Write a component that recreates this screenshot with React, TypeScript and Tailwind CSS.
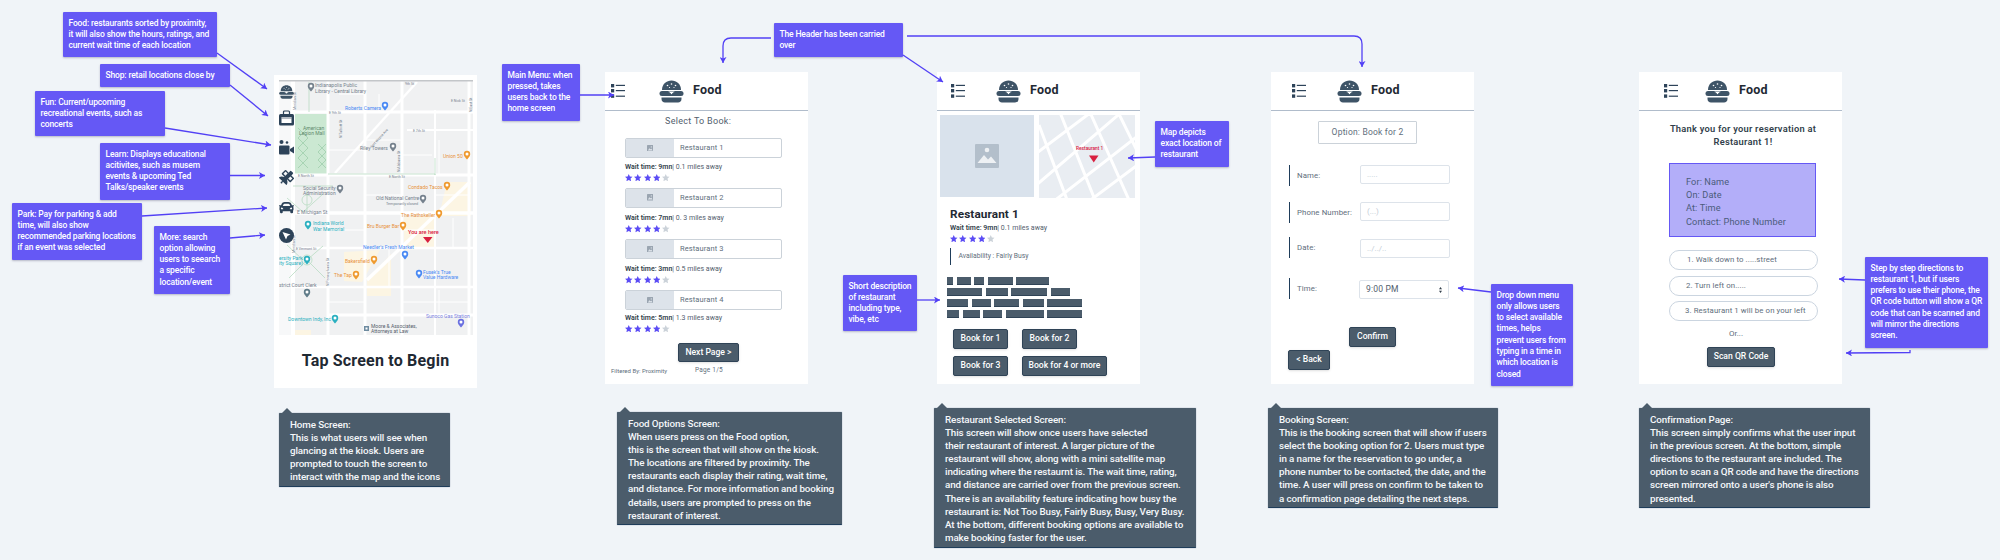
import React from 'react';
import { FaCar, FaSatellite } from 'react-icons/fa';

const ARROW = '#5240f5';

const Star: React.FC<{ on?: boolean }> = ({ on = true }) => (
  <svg viewBox="0 0 20 20" className={`w-[7.5px] h-[7.5px] ${on ? 'fill-[#5b4cf5]' : 'fill-[#cbd2d9]'}`}>
    <path d="M10 0l3 6.6 7 .8-5.2 4.8 1.4 7.1L10 15.7l-6.2 3.6 1.4-7.1L0 7.4l7-.8z" />
  </svg>
);

const Stars = ({ className = '' }: { className?: string }) => (
  <div className={`flex gap-[1.8px] ${className}`}>
    <Star /><Star /><Star /><Star /><Star on={false} />
  </div>
);

const Burger = ({ className = '' }: { className?: string }) => (
  <svg viewBox="0 0 24 23" className={className}>
    <path d="M2.5 10C2.5 4 7 .5 12 .5S21.5 4 21.5 10z" fill="#3e5467" />
    <circle cx="8" cy="5.5" r=".8" fill="#fff" /><circle cx="12" cy="4" r=".8" fill="#fff" /><circle cx="16" cy="5.5" r=".8" fill="#fff" />
    <circle cx="10" cy="7.5" r=".6" fill="#fff" /><circle cx="14.5" cy="7.5" r=".6" fill="#fff" />
    <rect x="0" y="11" width="24" height="5" rx="2.5" fill="#3e5467" />
    <path d="M8.5 11.5l3.5 3 3.5-3" fill="#fff" stroke="#3e5467" strokeWidth=".8" />
    <path d="M2 17.5h20v1.5c0 2-1.5 3.5-3.5 3.5h-13C3.5 22.5 2 21 2 19z" fill="#3e5467" />
  </svg>
);

const ListIcon = () => (
  <svg viewBox="0 0 14 14" className="w-[14px] h-[14px]">
    <rect x="0" y="0" width="3.2" height="3.4" fill="#2d4359" /><rect x="0" y="5" width="3.2" height="3.4" fill="#2d4359" /><rect x="0" y="10.4" width="3.2" height="3.4" fill="#2d4359" />
    <rect x="4.8" y=".8" width="9.2" height="1.2" fill="#2d4359" /><rect x="4.8" y="6" width="9.2" height="1.2" fill="#2d4359" /><rect x="4.8" y="11.6" width="9.2" height="1.2" fill="#2d4359" />
  </svg>
);

const Header = ({ pad, gap }: { pad: string; gap: string }) => (
  <div className={`h-[39px] border-b border-[#b0bccb] flex items-center ${pad}`}>
    <div className={gap}><ListIcon /></div>
    <Burger className="w-[25px] h-[23px]" />
    <span className="ml-[9px] mb-[1px] text-[12.5px] font-bold text-[#1f2933] tracking-[0.2px]">Food</span>
  </div>
);

const Btn = ({ className, children }: { className: string; children: React.ReactNode }) => (
  <div className={`h-[19.5px] flex items-center justify-center bg-[#4b5c6b] border border-[#2f4356] rounded-[2px] text-white text-[8.6px] font-medium shadow-sm whitespace-nowrap ${className}`}>
    {children}
  </div>
);

const Note = ({ className, lines }: { className: string; lines: string[] }) => (
  <div className={`absolute bg-[#6558f5] shadow-[0_1px_2px_rgba(50,50,93,0.3)] rounded-[1px] px-[5.5px] pt-[5.5px] text-white text-[8.5px] tracking-[-0.15px] leading-[11.33px] font-medium whitespace-nowrap ${className}`}>
    {lines.map((l) => <div key={l}>{l}</div>)}
  </div>
);

const Desc = ({ className, lines }: { className: string; lines: string[] }) => (
  <div className={`absolute bg-[#4b5c6b] border-b border-[#1f3d5a] shadow-[0_0_1px_rgba(31,61,90,0.8)] rounded-[1px] pl-[11px] pt-[4.5px] text-[#f5f7fa] text-[9.8px] tracking-[-0.1px] leading-[13.17px] font-medium whitespace-nowrap ${className}`}>
    <div className="absolute -top-[5px] left-[3px] w-[10px] h-[5px] bg-[#4b5c6b] [clip-path:polygon(50%_0,100%_100%,0_100%)]" />
    {lines.map((l) => <div key={l}>{l}</div>)}
  </div>
);

const Pin = ({ x, y, c }: { x: number; y: number; c: string }) => (
  <g transform={`translate(${x} ${y})`}>
    <path d="M0 4.5C-2.8 1.5-3.2 .5-3.2-1a3.2 3.2 0 0 1 6.4 0C3.2 .5 2.8 1.5 0 4.5z" fill={c} />
    <circle cx="0" cy="-1" r="1.5" fill="#fff" />
  </g>
);

const mapLabels: [string, number, number, string, number?][] = [
  ['Indianapolis Public', 36, 7, '#75818d'], ['Library - Central Library', 36, 12.5, '#75818d'],
  ['Roberts Camera', 66, 29.5, '#4a8af4'], ['American', 24, 50, '#5f8a6e'], ['Legion Mall', 20, 55, '#5f8a6e'],
  ['Riley Towers', 81, 70, '#75818d'], ['Union 50', 164, 78, '#e8913a'], ['Condado Tacos', 129, 109, '#e8913a'],
  ['Social Security', 24, 110, '#75818d'], ['Administration', 24, 115, '#75818d'],
  ['Old National Centre', 97, 120, '#75818d'], ['Temporarily closed', 107, 125, '#75818d', 3.8],
  ['E Michigan St', 18, 134, '#75818d'], ['The Rathskeller', 122, 137, '#e8913a'],
  ['Indiana World', 34, 145, '#2bb0c0'], ['War Memorial', 34, 151, '#2bb0c0'], ['Bru Burger Bar', 88, 148, '#e8913a'],
  ["Needler's Fresh Market", 84, 169, '#4a8af4'], ['Bakersfield', 66, 183, '#e8913a'],
  ["Fusek's True", 144, 194, '#4a8af4'], ['Value Hardware', 144, 199, '#4a8af4'], ['The Tap', 55, 197, '#e8913a'],
  ['ersity Park', 0, 180, '#2bb0c0'], ['ity Square)', 0, 185, '#2bb0c0'], ['strict Court Clerk', 0, 207, '#75818d'],
  ['Downtown Indy, Inc', 9, 241, '#2bb0c0'], ['Sunoco Gas Station', 147, 238, '#7a7fe0'],
  ['Moore & Associates,', 92, 248, '#55606b'], ['Attorneys at Law', 92, 253, '#55606b'],
  ['E 9th St', 50, 34, '#75818d', 3.5], ['E 7th St', 134, 52, '#75818d', 3.5], ['E North St', 110, 98, '#75818d', 3.5],
  ['E North St', 19, 97, '#75818d', 3.5], ['E Nick St', 172, 22, '#75818d', 3.5], ['9th St', 126, 5, '#75818d', 3.5],
  ['E Vermont St', 17, 170, '#75818d', 3.5],
];

const mapPins: [number, number, string][] = [
  [32, 7, '#75818d'], [106, 26, '#4a8af4'], [114, 67, '#75818d'], [188, 75, '#ef9a2f'], [168, 106, '#ef9a2f'], [61, 109, '#75818d'],
  [144, 119, '#75818d'], [160, 134, '#ef9a2f'], [29, 145, '#2bb0c0'], [124, 146, '#ef9a2f'], [126, 175, '#4a8af4'], [95, 180, '#ef9a2f'],
  [140, 194, '#4a8af4'], [77, 195, '#ef9a2f'], [28, 180, '#2bb0c0'], [28, 213, '#5f7b88'], [56, 239, '#2bb0c0'], [182, 243, '#6a70e0'],
];

const MapDrawing = () => (
  <svg viewBox="0 0 194 255" className="w-[194px] h-[255px] block bg-[#f0f1f2] font-['Roboto',sans-serif]">
    <rect x="0" y="0" width="14" height="255" fill="#f7f8f9" />
    <rect x="16" y="34" width="33" height="60" fill="#cbe8d2" />
    <path d="M19 48l10 10-10 10 10 10-10 10M29 48L19 58l10 10-10 10 10 10M39 64l8 8-8 8 8 8M47 64l-8 8 8 8-8 8" fill="none" stroke="#9acba7" strokeWidth=".7" />
    <path d="M168 102h24v34h-32zM125 137l30-1v32l-30 2zM65 172l36-2-18 32-18-1zM12 250h20v5H12zM88 200l24-26v42H88z" fill="#fcf5e3" />
    <g stroke="#fff" fill="none">
      <path d="M14 0v255" strokeWidth="4" /><path d="M49 0v255" strokeWidth="3" /><path d="M86 0v255" strokeWidth="3" /><path d="M123 0v255" strokeWidth="3" /><path d="M156 30v225" strokeWidth="2" /><path d="M190 0v255" strokeWidth="3" />
      <path d="M14 32H194" strokeWidth="3" /><path d="M128 50H194" strokeWidth="2" /><path d="M14 95H194" strokeWidth="3" /><path d="M14 133H194" strokeWidth="3.5" /><path d="M14 168H194" strokeWidth="2.5" /><path d="M14 207H194" strokeWidth="2.5" /><path d="M49 235H194" strokeWidth="3" />
      <path d="M138 2L56 93" strokeWidth="2.5" /><path d="M191 102L88 200" strokeWidth="3.5" />
      <path d="M49 70H86M86 60h37M123 75h30M49 150h37M123 150h33M86 115h37M156 115h34M49 222h37M123 222h67M60 14h26M100 14v18M160 60v35M174 138v30M110 170v37M160 210v25" strokeWidth="1" />
    </g>
    <path d="M30 2v30M49 94h107v1M156 78v17M14 106h40M8 118l16 14 20-18M28 132v-22M24 180L8 165M28 180l16-14M28 180L10 198M28 180l18 18" fill="none" stroke="#b9dcc3" strokeWidth=".8" />
    <circle cx="28" cy="120" r="5" fill="none" stroke="#b9dcc3" strokeWidth=".8" /><circle cx="28" cy="180" r="5" fill="none" stroke="#b9dcc3" strokeWidth=".8" />
    <rect x="0" y="0" width="194" height="1.5" fill="#c3c6c9" />
    {mapPins.map(([x, y, c]) => <Pin key={`${x}-${y}`} x={x} y={y} c={c} />)}
    {mapLabels.map(([t, x, y, c, s]) => <text key={`${t}-${x}-${y}`} x={x} y={y} fontSize={s ?? 5} fill={c}>{t}</text>)}
    <text x="17" y="30" fontSize="3.5" fill="#75818d" transform="rotate(-90 17 30)">Meridian St</text>
    <text x="63" y="58" fontSize="3.5" fill="#75818d" transform="rotate(-90 63 58)">N Talbott St</text>
    <text x="93" y="68" fontSize="3.5" fill="#75818d" transform="rotate(-48 93 68)">Fort Wayne Ave</text>
    <text x="121" y="92" fontSize="3.5" fill="#75818d" transform="rotate(-90 121 92)">N Alabama St</text>
    <text x="193" y="32" fontSize="3.5" fill="#75818d" transform="rotate(-90 193 32)">N East St</text>
    <text x="16" y="173" fontSize="3.5" fill="#75818d" transform="rotate(-90 16 173)">Meridian St</text>
    <text x="50" y="206" fontSize="3.5" fill="#75818d" transform="rotate(-90 50 206)">N Pennsylvania St</text>
    <rect x="85" y="246" width="5" height="5" fill="#6e8ba0" /><rect x="86.5" y="247.5" width="2" height="2" fill="#fff" />
    <text x="129" y="154" fontSize="5.5" fontWeight="500" fill="#d8203f">You are here</text>
    <path d="M144 157h9.5l-4.75 6z" fill="#d8203f" />
  </svg>
);

const SideIcons = () => (
  <div className="w-[15px] flex flex-col items-center text-[#2d4359]">
    <Burger className="w-[15px] h-[14px]" />
    <svg viewBox="0 0 15 16" className="w-[15px] h-[16px] mt-[11px]">
      <path d="M4.5 4V2a1 1 0 0 1 1-1h4a1 1 0 0 1 1 1v2" fill="none" stroke="#2d4359" strokeWidth="1.2" />
      <rect x="0" y="4" width="15" height="11.5" rx="1.5" fill="#2d4359" /><rect x="2.5" y="7" width="10" height="6" fill="#fff" /><rect x="2.5" y="7" width="10" height="2" fill="#2d4359" opacity=".35" />
    </svg>
    <svg viewBox="0 0 15 15" className="w-[15px] h-[15px] mt-[14px]">
      <circle cx="2.5" cy="2" r="2" fill="#2d4359" /><circle cx="8" cy="2.5" r="1.3" fill="#2d4359" />
      <rect x="0" y="5.5" width="10.5" height="9" rx="1" fill="#2d4359" /><path d="M15 6.5v7l-4-2.5V9z" fill="#2d4359" />
    </svg>
    <FaSatellite className="w-[15px] h-[15px] mt-[15px]" />
    <FaCar className="w-[15px] h-[15px] mt-[15px]" />
    <svg viewBox="0 0 15 15" className="w-[15px] h-[15px] mt-[13px]">
      <circle cx="7.5" cy="7.5" r="7.5" fill="#2d4359" /><path d="M3.5 4l8 2.5-3 1.5-1.5 3.5z" fill="#fff" />
    </svg>
  </div>
);

const restaurants = [
  { name: 'Restaurant 1', wait: 'Wait time: 9mn', miles: '| 0.1 miles away', mt: 'mt-[4.5px]' },
  { name: 'Restaurant 2', wait: 'Wait time: 7mn', miles: '| 0. 3 miles away', mt: 'mt-[6.5px]' },
  { name: 'Restaurant 3', wait: 'Wait time: 3mn', miles: '| 0.5 miles away', mt: 'mt-[6px]' },
  { name: 'Restaurant 4', wait: 'Wait time: 5mn', miles: '| 1.3 miles away', mt: 'mt-[3.5px]' },
];

const Thumb = () => (
  <svg viewBox="0 0 12 12" className="w-[6.5px] h-[6.5px]">
    <rect width="12" height="12" rx="1" fill="#9aa5b1" /><path d="M1.5 10l3-4 2 2 1.5-1.5 2.5 3.5z" fill="#dde3ea" /><circle cx="8" cy="3.5" r="1.2" fill="#dde3ea" />
  </svg>
);

const FoodCard = () => (
  <div className="absolute left-[605px] top-[72px] w-[203px] h-[312px] bg-white">
    <Header pad="pl-[6px]" gap="mr-[34px]" />
    <div className="mt-[3px] pl-[60px] text-[9px] leading-[14px] text-[#52606d] tracking-[0.3px]">Select To Book:</div>
    <div className="mt-[10px] ml-[20px] flex flex-col gap-[6.5px]">
      {restaurants.map((r) => (
        <div key={r.name}>
          <div className="w-[157px] h-[20px] flex rounded-[2px] border border-[#cbd2d9] overflow-hidden">
            <div className="w-[48px] bg-[#dde3ea] flex items-center justify-center"><Thumb /></div>
            <div className="pl-[6px] flex items-center text-[7.5px] text-[#616e7c] tracking-[0.1px]">{r.name}</div>
          </div>
          <div className={`${r.mt} h-[9px] leading-[9px] text-[7px] text-[#52606d] whitespace-nowrap`}>
            <span className="font-semibold text-[#323f4b]">{r.wait}</span>{r.miles}
          </div>
          <Stars className="mt-[2px]" />
        </div>
      ))}
    </div>
    <Btn className="w-[61px] ml-[73px] mt-[10.5px]">Next Page &gt;</Btn>
    <div className="ml-[6px] mt-[3px] flex items-center text-[#616e7c]">
      <span className="w-[84px] text-[6px]">Filtered By: Proximity</span>
      <span className="text-[6.5px] tracking-[0.2px] mt-[1px]">Page 1/5</span>
    </div>
  </div>
);

const textBlocks = [
  [6, 14, 10, 25, 33],
  [35, 22, 36, 19],
  [21, 19, 25, 21, 35],
  [12, 17, 19, 38, 35],
];

const RestaurantCard = () => (
  <div className="absolute left-[937px] top-[72px] w-[203px] h-[312px] bg-white">
    <Header pad="pl-[14px]" gap="mr-[31px]" />
    <div className="mt-[4px] ml-[3px] flex gap-[5px]">
      <div className="w-[94px] h-[82px] bg-[#d9e2ec] flex items-center justify-center">
        <svg viewBox="0 0 24 24" className="w-[24px] h-[24px]">
          <rect width="24" height="24" rx="1" fill="#b3bfcb" /><path d="M2.5 19l6.5-8 4 4.5 3-3 5.5 6.5z" fill="#eef1f4" /><circle cx="12" cy="6" r="2.3" fill="#eef1f4" />
        </svg>
      </div>
      <svg viewBox="0 0 96 83" className="w-[96px] h-[83px] bg-[#e9edf2] font-['Roboto',sans-serif]">
        <path d="M-5 40L55-5M-5 72L85-5M10 90L100 20M45 90L105 45M0 10L30 90M20-5L60 95M50-5L90 85M78-5L105 50" stroke="#fff" strokeWidth="3" fill="none" />
        <text x="37" y="35" fontSize="4.8" fontWeight="500" fill="#d8203f">Restaurant 1</text>
        <path d="M50 40.5h9.5l-4.75 7z" fill="#d8203f" />
      </svg>
    </div>
    <div className="mt-[9px] ml-[13px] text-[11.8px] leading-[15px] font-bold text-[#1f2933] tracking-[0.1px]">Restaurant 1</div>
    <div className="ml-[13px] mt-[1.5px] h-[9px] leading-[9px] text-[7px] text-[#52606d] whitespace-nowrap">
      <span className="font-semibold text-[#323f4b]">Wait time: 9mn</span>| 0.1 miles away
    </div>
    <Stars className="ml-[13px] mt-[2px]" />
    <div className="ml-[13px] mt-[6px] h-[17px] border-l-[1.5px] border-[#1f3d5a] pl-[7.5px] flex items-center text-[6.8px] text-[#616e7c]">Availability : Fairly Busy</div>
    <div className="ml-[10px] mt-[12px] flex flex-col gap-[3px]">
      {textBlocks.map((row) => (
        <div key={row.join()} className="flex gap-[3.5px]">
          {row.map((w, i) => <div key={i} className="h-[8px] bg-[#4b5c6b] border-b border-[#2f4356]" style={{ width: w }} />)}
        </div>
      ))}
    </div>
    <div className="ml-[16px] mt-[11px] grid grid-cols-[55px_auto] gap-x-[14px] gap-y-[7.5px] justify-start">
      <Btn className="w-[55px]">Book for 1</Btn>
      <Btn className="w-[55px]">Book for 2</Btn>
      <Btn className="w-[55px]">Book for 3</Btn>
      <Btn className="w-[85px]">Book for 4 or more</Btn>
    </div>
  </div>
);

const Field = ({ label, hint, mt, inputMt = '' }: { label: string; hint: string; mt: string; inputMt?: string }) => (
  <div className={`flex ${mt}`}>
    <div className="h-[21px] border-l-[1.5px] border-[#1f3d5a] w-[71px] pl-[7px] flex items-center text-[7.8px] text-[#616e7c] whitespace-nowrap tracking-[0.1px]">{label}</div>
    <div className={`w-[90px] h-[19px] border border-[#dde3ea] rounded-[2px] pl-[6px] flex items-center text-[8px] text-[#c3ccd6] ${inputMt}`}>{hint}</div>
  </div>
);

const BookingCard = () => (
  <div className="absolute left-[1271px] top-[72px] w-[203px] h-[312px] bg-white">
    <Header pad="pl-[21px]" gap="mr-[31px]" />
    <div className="mt-[10px] ml-[47px] w-[99px] h-[23px] border border-[#cbd2d9] rounded-[1px] flex items-center justify-center text-[8.5px] text-[#616e7c] tracking-[0.2px]">Option: Book for 2</div>
    <div className="ml-[18px]">
      <Field label="Name:" hint="....." mt="mt-[21px]" />
      <Field label="Phone Number:" hint="(...)" mt="mt-[16px]" />
      <Field label="Date:" hint="../../.." mt="mt-[14px]" inputMt="mt-[2px]" />
      <div className="flex mt-[20px]">
        <div className="h-[21px] border-l-[1.5px] border-[#1f3d5a] w-[70px] pl-[7px] flex items-center text-[7.8px] text-[#616e7c] tracking-[0.1px]">Time:</div>
        <div className="w-[90px] h-[19px] mt-[2px] border border-[#dde3ea] rounded-[2px] pl-[6px] pr-[6px] flex items-center justify-between text-[8.5px] text-[#52606d] tracking-[0.2px]">
          <span>9:00 PM</span>
          <svg viewBox="0 0 4 8" className="w-[3px] h-[6px] fill-[#323f4b]"><path d="M2 0l2 3H0zM2 8L0 5h4z" /></svg>
        </div>
      </div>
    </div>
    <Btn className="w-[47px] ml-[78px] mt-[28px]">Confirm</Btn>
    <Btn className="w-[42px] ml-[17px] mt-[3.5px]">&lt; Back</Btn>
  </div>
);

const ConfirmCard = () => (
  <div className="absolute left-[1639px] top-[72px] w-[203px] h-[312px] bg-white">
    <Header pad="pl-[25px]" gap="mr-[27px]" />
    <div className="mt-[11px] ml-[5px] text-center text-[9.3px] leading-[13px] font-semibold text-[#323f4b] tracking-[0.25px]">
      <div>Thank you for your reservation at</div>
      <div>Restaurant 1!</div>
    </div>
    <div className="mt-[15px] ml-[30px] w-[147px] h-[74px] bg-[#b3aef9] border border-[#6558f5] pl-[16px] pt-[11px] text-[9.2px] leading-[13.17px] text-[#4b5c7b] tracking-[0.1px]">
      <div>For: Name</div><div>On: Date</div><div>At: Time</div><div>Contact: Phone Number</div>
    </div>
    <div className="mt-[13px] ml-[30px] flex flex-col gap-[5.5px]">
      <div className="w-[149px] h-[20px] rounded-full border border-[#cbd5e0] pl-[17px] flex items-center text-[7.8px] text-[#616e7c] tracking-[0.1px]">1. Walk down to .....street</div>
      <div className="w-[149px] h-[20px] rounded-full border border-[#cbd5e0] pl-[16px] flex items-center text-[7.8px] text-[#616e7c] tracking-[0.1px]">2. Turn left on.....</div>
      <div className="w-[149px] h-[20px] rounded-full border border-[#cbd5e0] pl-[15px] flex items-center text-[7.8px] text-[#616e7c] tracking-[0.1px]">3. Restaurant 1 will be on your left</div>
    </div>
    <div className="mt-[7px] ml-[90px] text-[8px] leading-[12px] text-[#616e7c]">Or...</div>
    <Btn className="w-[68px] ml-[68px] mt-[7px]">Scan QR Code</Btn>
  </div>
);

const Arrows = () => (
  <svg viewBox="0 0 2000 560" className="absolute inset-0 w-[2000px] h-[560px] pointer-events-none">
    <defs>
      <marker id="head" markerUnits="userSpaceOnUse" markerWidth="7" markerHeight="7" refX="6" refY="3.5" orient="auto">
        <path d="M0 0l6 3.5-6 3.5 1.5-3.5z" fill={ARROW} />
      </marker>
    </defs>
    <g fill="none" stroke={ARROW} strokeWidth="1.3">
      <path d="M217 53L267 89" markerEnd="url(#head)" />
      <path d="M230 85L268 116" markerEnd="url(#head)" />
      <path d="M165 128L271 145" markerEnd="url(#head)" />
      <path d="M230 175.5H265" markerEnd="url(#head)" />
      <path d="M142 216L267 208" markerEnd="url(#head)" />
      <path d="M230 238L265 235" markerEnd="url(#head)" />
      <path d="M580 95H614" markerEnd="url(#head)" />
      <path d="M771 38H731Q723 38 723 46V63" markerEnd="url(#head)" />
      <path d="M907 36H1354Q1362 36 1362 44V67" markerEnd="url(#head)" />
      <path d="M903 55L943 82" markerEnd="url(#head)" />
      <path d="M1155 157L1128 158" markerEnd="url(#head)" />
      <path d="M917 300H940" markerEnd="url(#head)" />
      <path d="M1491 292L1458 288" markerEnd="url(#head)" />
      <path d="M1865 280L1839 279" markerEnd="url(#head)" />
      <path d="M1910 350V352.5L1846 353" markerEnd="url(#head)" />
    </g>
  </svg>
);

export default function App() {
  return (
    <div className="relative w-[2000px] h-[560px] overflow-hidden bg-[#f0f4f8] font-['Roboto',sans-serif]">
      {/* home screen */}
      <div className="absolute left-[274px] top-[75px] w-[203px] h-[313px] bg-white">
        <div className="ml-[5px] mt-[5px]"><MapDrawing /></div>
        <div className="mt-[14px] text-center text-[16px] leading-[24px] font-bold text-[#1f2933] tracking-[0.2px]">Tap Screen to Begin</div>
      </div>
      <div className="absolute left-[279px] top-[85px]"><SideIcons /></div>

      <FoodCard />
      <RestaurantCard />
      <BookingCard />
      <ConfirmCard />

      <Note className="left-[63px] top-[12px] w-[154px] h-[45px]" lines={['Food: restaurants sorted by proximity,', 'it will also show the hours, ratings, and', 'current wait time of each location']} />
      <Note className="left-[100px] top-[64px] w-[130px] h-[23px]" lines={['Shop: retail locations close by']} />
      <Note className="left-[35px] top-[91px] w-[130px] h-[45px]" lines={['Fun: Current/upcoming', 'recreational events, such as', 'concerts']} />
      <Note className="left-[100px] top-[143px] w-[130px] h-[57px]" lines={['Learn: Displays educational', 'acitivites, such as musem', 'events & upcoming Ted', 'Talks/speaker events']} />
      <Note className="left-[12px] top-[203px] w-[130px] h-[57px]" lines={['Park: Pay for parking & add', 'time, will also show', 'recommended parking locations', 'if an event was selected']} />
      <Note className="left-[154px] top-[226px] w-[76px] h-[68px]" lines={['More: search', 'option allowing', 'users to seearch', 'a specific', 'location/event']} />
      <Note className="left-[502px] top-[64px] w-[78px] h-[57px]" lines={['Main Menu: when', 'pressed, takes', 'users back to the', 'home screen']} />
      <Note className="left-[774px] top-[23px] w-[129px] h-[34px]" lines={['The Header has been carried', 'over']} />
      <Note className="left-[1155px] top-[121px] w-[74px] h-[46px]" lines={['Map depicts', 'exact location of', 'restaurant']} />
      <Note className="left-[843px] top-[275px] w-[74px] h-[56px]" lines={['Short description', 'of restaurant', 'including type,', 'vibe, etc']} />
      <Note className="left-[1491px] top-[284px] w-[82px] h-[102px]" lines={['Drop down menu', 'only allows users', 'to select available', 'times, helps', 'prevent users from', 'typing in a time in', 'which location is', 'closed']} />
      <Note className="left-[1865px] top-[257px] w-[123px] h-[91px]" lines={['Step by step directions to', 'restaurant 1, but if users', 'prefers to use their phone, the', 'QR code button will show a QR', 'code that can be scanned and', 'will mirror the directions', 'screen.']} />

      <Desc className="left-[279px] top-[413px] w-[171px] h-[74px]" lines={['Home Screen:', 'This is what users will see when', 'glancing at the kiosk. Users are', 'prompted to touch the screen to', 'interact with the map and the icons']} />
      <Desc className="left-[617px] top-[412px] w-[225px] h-[113px]" lines={['Food Options Screen:', 'When users press on the Food option,', 'this is the screen that will show on the kiosk.', 'The locations are filtered by proximity. The', 'restaurants each display their rating, wait time,', 'and distance. For more information and booking', 'details, users are prompted to press on the', 'restaurant of interest.']} />
      <Desc className="left-[934px] top-[408px] w-[262px] h-[140px]" lines={['Restaurant Selected Screen:', 'This screen will show once users have selected', 'their restaurant of interest. A larger picture of the', 'restaurant will show, along with a mini satellite map', 'indicating where the restaurnt is. The wait time, rating,', 'and distance are carried over from the previous screen.', 'There is an availability feature indicating how busy the', 'restaurant is: Not Too Busy, Fairly Busy, Busy, Very Busy.', 'At the bottom, different booking options are available to', 'make booking faster for the user.']} />
      <Desc className="left-[1268px] top-[408px] w-[230px] h-[100px]" lines={['Booking Screen:', 'This is the booking screen that will show if users', 'select the booking option for 2. Users must type', 'in a name for the reservation to go under, a', 'phone number to be contacted, the date, and the', 'time. A user will press on confirm to be taken to', 'a confirmation page detailing the next steps.']} />
      <Desc className="left-[1639px] top-[408px] w-[231px] h-[100px]" lines={['Confirmation Page:', 'This screen simply confirms what the user input', 'in the previous screen. At the bottom, simple', 'directions to the restaurant are included. The', 'option to scan a QR code and have the directions', "screen mirrored onto a user's phone is also", 'presented.']} />

      <Arrows />
    </div>
  );
}
